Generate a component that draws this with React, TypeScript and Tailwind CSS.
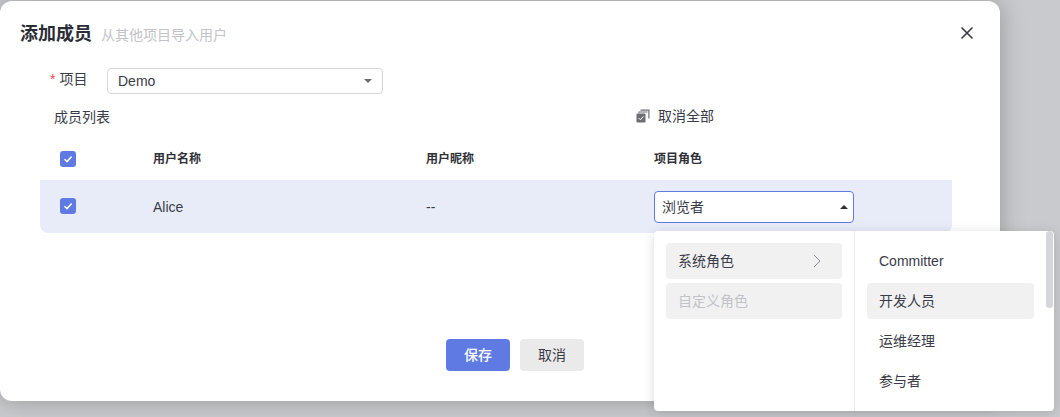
import React from 'react';
import { X } from 'lucide-react';

const font = 'font-["Liberation_Sans","Noto_Sans_CJK_SC",sans-serif]';

const Check: React.FC = () => (
    <span className="w-4 h-4 rounded-[3px] bg-[#5f7be3] flex items-center justify-center">
        <svg viewBox="0 0 16 16" className="w-4 h-4" fill="none">
            <path d="M4.5 8.2 7 10.6l4.6-5" stroke="#fff" strokeWidth="1.5" />
        </svg>
    </span>
);

const CopyCheck: React.FC = () => (
    <svg viewBox="0 0 14 14" className="w-[14px] h-[14px]">
        <path d="M4.5.5h9v9h-1.2V1.7H4.5z" fill="#6b6d75" />
        <path d="M2.5 2.5h9v1h-8v.6h-1z" fill="#6b6d75" />
        <rect x="0.5" y="4.5" width="9" height="9" rx="1" fill="#6b6d75" />
        <path d="M2.6 9l1.8 1.8 3-3.4" stroke="#fff" strokeWidth="1" fill="none" />
    </svg>
);

const App: React.FC = () => {
    const roles = ['Committer', '开发人员', '运维经理', '参与者'];

    return (
        <div className={`${font} relative w-[1060px] h-[417px] overflow-hidden bg-[#c9cacd] pt-px text-[#3a3c48]`}>
            {/* Dialog */}
            <div className="w-[1000px] h-[400px] bg-white rounded-xl shadow-[0_0_24px_rgba(0,0,0,0.25)] flex flex-col">
                <div className="h-[66px] pl-5 pr-[23px] flex items-center justify-between">
                    <div className="flex items-baseline gap-[9px] -mt-px">
                        <span className="text-lg font-bold text-[#2b2d36]">添加成员</span>
                        <span className="text-sm text-[#c2c3c7]">从其他项目导入用户</span>
                    </div>
                    <X className="w-[20px] h-[20px] text-[#3a3c48] -mt-[2px]" strokeWidth={2} />
                </div>

                <div className="pl-[50px] flex items-center h-[28px]">
                    <span className="text-sm flex items-center w-[57px] -mt-[5px]">
                        <span className="text-[#e5484d] mr-[4px]">*</span>项目
                    </span>
                    <div className="w-[276px] h-[26px] border border-[#d5d6d9] rounded-[4px] flex items-center justify-between pl-[10px] pr-[10px]">
                        <span className="text-sm">Demo</span>
                        <span className="w-0 h-0 border-x-[4px] border-x-transparent border-t-[4px] border-t-[#6b6d75]" />
                    </div>
                </div>

                <div className="pl-[54px] flex items-center h-[44px] mt-px text-sm">
                    <span className="w-[582px] -mt-[2px]">成员列表</span>
                    <div className="flex items-center gap-2 -mt-[5px]">
                        <CopyCheck />
                        <span>取消全部</span>
                    </div>
                </div>

                {/* Table */}
                <div className="ml-[40px] w-[912px]">
                    <div className="h-[40px] flex items-center text-xs font-bold text-[#2f3038] -mt-px">
                        <div className="w-[113px] pl-5"><Check /></div>
                        <div className="w-[273px]">用户名称</div>
                        <div className="w-[228px]">用户昵称</div>
                        <div>项目角色</div>
                    </div>
                    <div className="h-[53px] mt-px bg-[#e8ecf8] rounded-b-lg flex items-center text-sm">
                        <div className="w-[113px] pl-5 -mt-[2px]"><Check /></div>
                        <div className="w-[273px]">Alice</div>
                        <div className="w-[228px]">--</div>
                        <div className="w-[200px] h-[32px] bg-white border border-[#5f7be3] rounded-[4px] flex items-center justify-between pl-[7px] pr-[5px]">
                            <span>浏览者</span>
                            <span className="w-0 h-0 border-x-[4px] border-x-transparent border-b-[4px] border-b-[#2f3038]" />
                        </div>
                    </div>
                </div>

                <div className="flex justify-center gap-[10px] mt-[106px] ml-[30px] text-sm">
                    <button className="w-16 h-8 rounded-[4px] bg-[#5f7be3] text-white font-medium">保存</button>
                    <button className="w-16 h-8 rounded-[4px] bg-[#eaeaea]">取消</button>
                </div>
            </div>

            {/* Role dropdown */}
            <div className="absolute left-[654px] top-[231px] w-[400px] h-[180px] bg-white rounded-[4px] shadow-[0_2px_12px_rgba(0,0,0,0.15)] flex text-sm">
                <div className="w-[201px] border-r border-[#e8ebf3] p-3 flex flex-col gap-1">
                    <div className="h-9 rounded-[4px] bg-[#f1f1f2] flex items-center justify-between pl-3 pr-[21px]">
                        <span>系统角色</span>
                        <svg viewBox="0 0 8 14" className="w-2 h-[14px]" fill="none">
                            <path d="M1 1l6 6-6 6" stroke="#8a8b92" strokeWidth="1" />
                        </svg>
                    </div>
                    <div className="h-9 rounded-[4px] bg-[#f1f1f2] flex items-center pl-3 text-[#c2c3c7]">自定义角色</div>
                </div>
                <div className="pl-3 pt-3 flex flex-col gap-1 w-[179px]">
                    {roles.map((role, i) => (
                        <div key={role} className={`h-9 rounded-[4px] flex items-center pl-3 ${i === 1 ? 'bg-[#f1f1f2]' : ''}`}>{role}</div>
                    ))}
                </div>
                <div className="absolute right-[1px] top-0 w-[7px] h-[77px] rounded bg-[#d5d6d9]" />
            </div>
        </div>
    );
};

export default App;
